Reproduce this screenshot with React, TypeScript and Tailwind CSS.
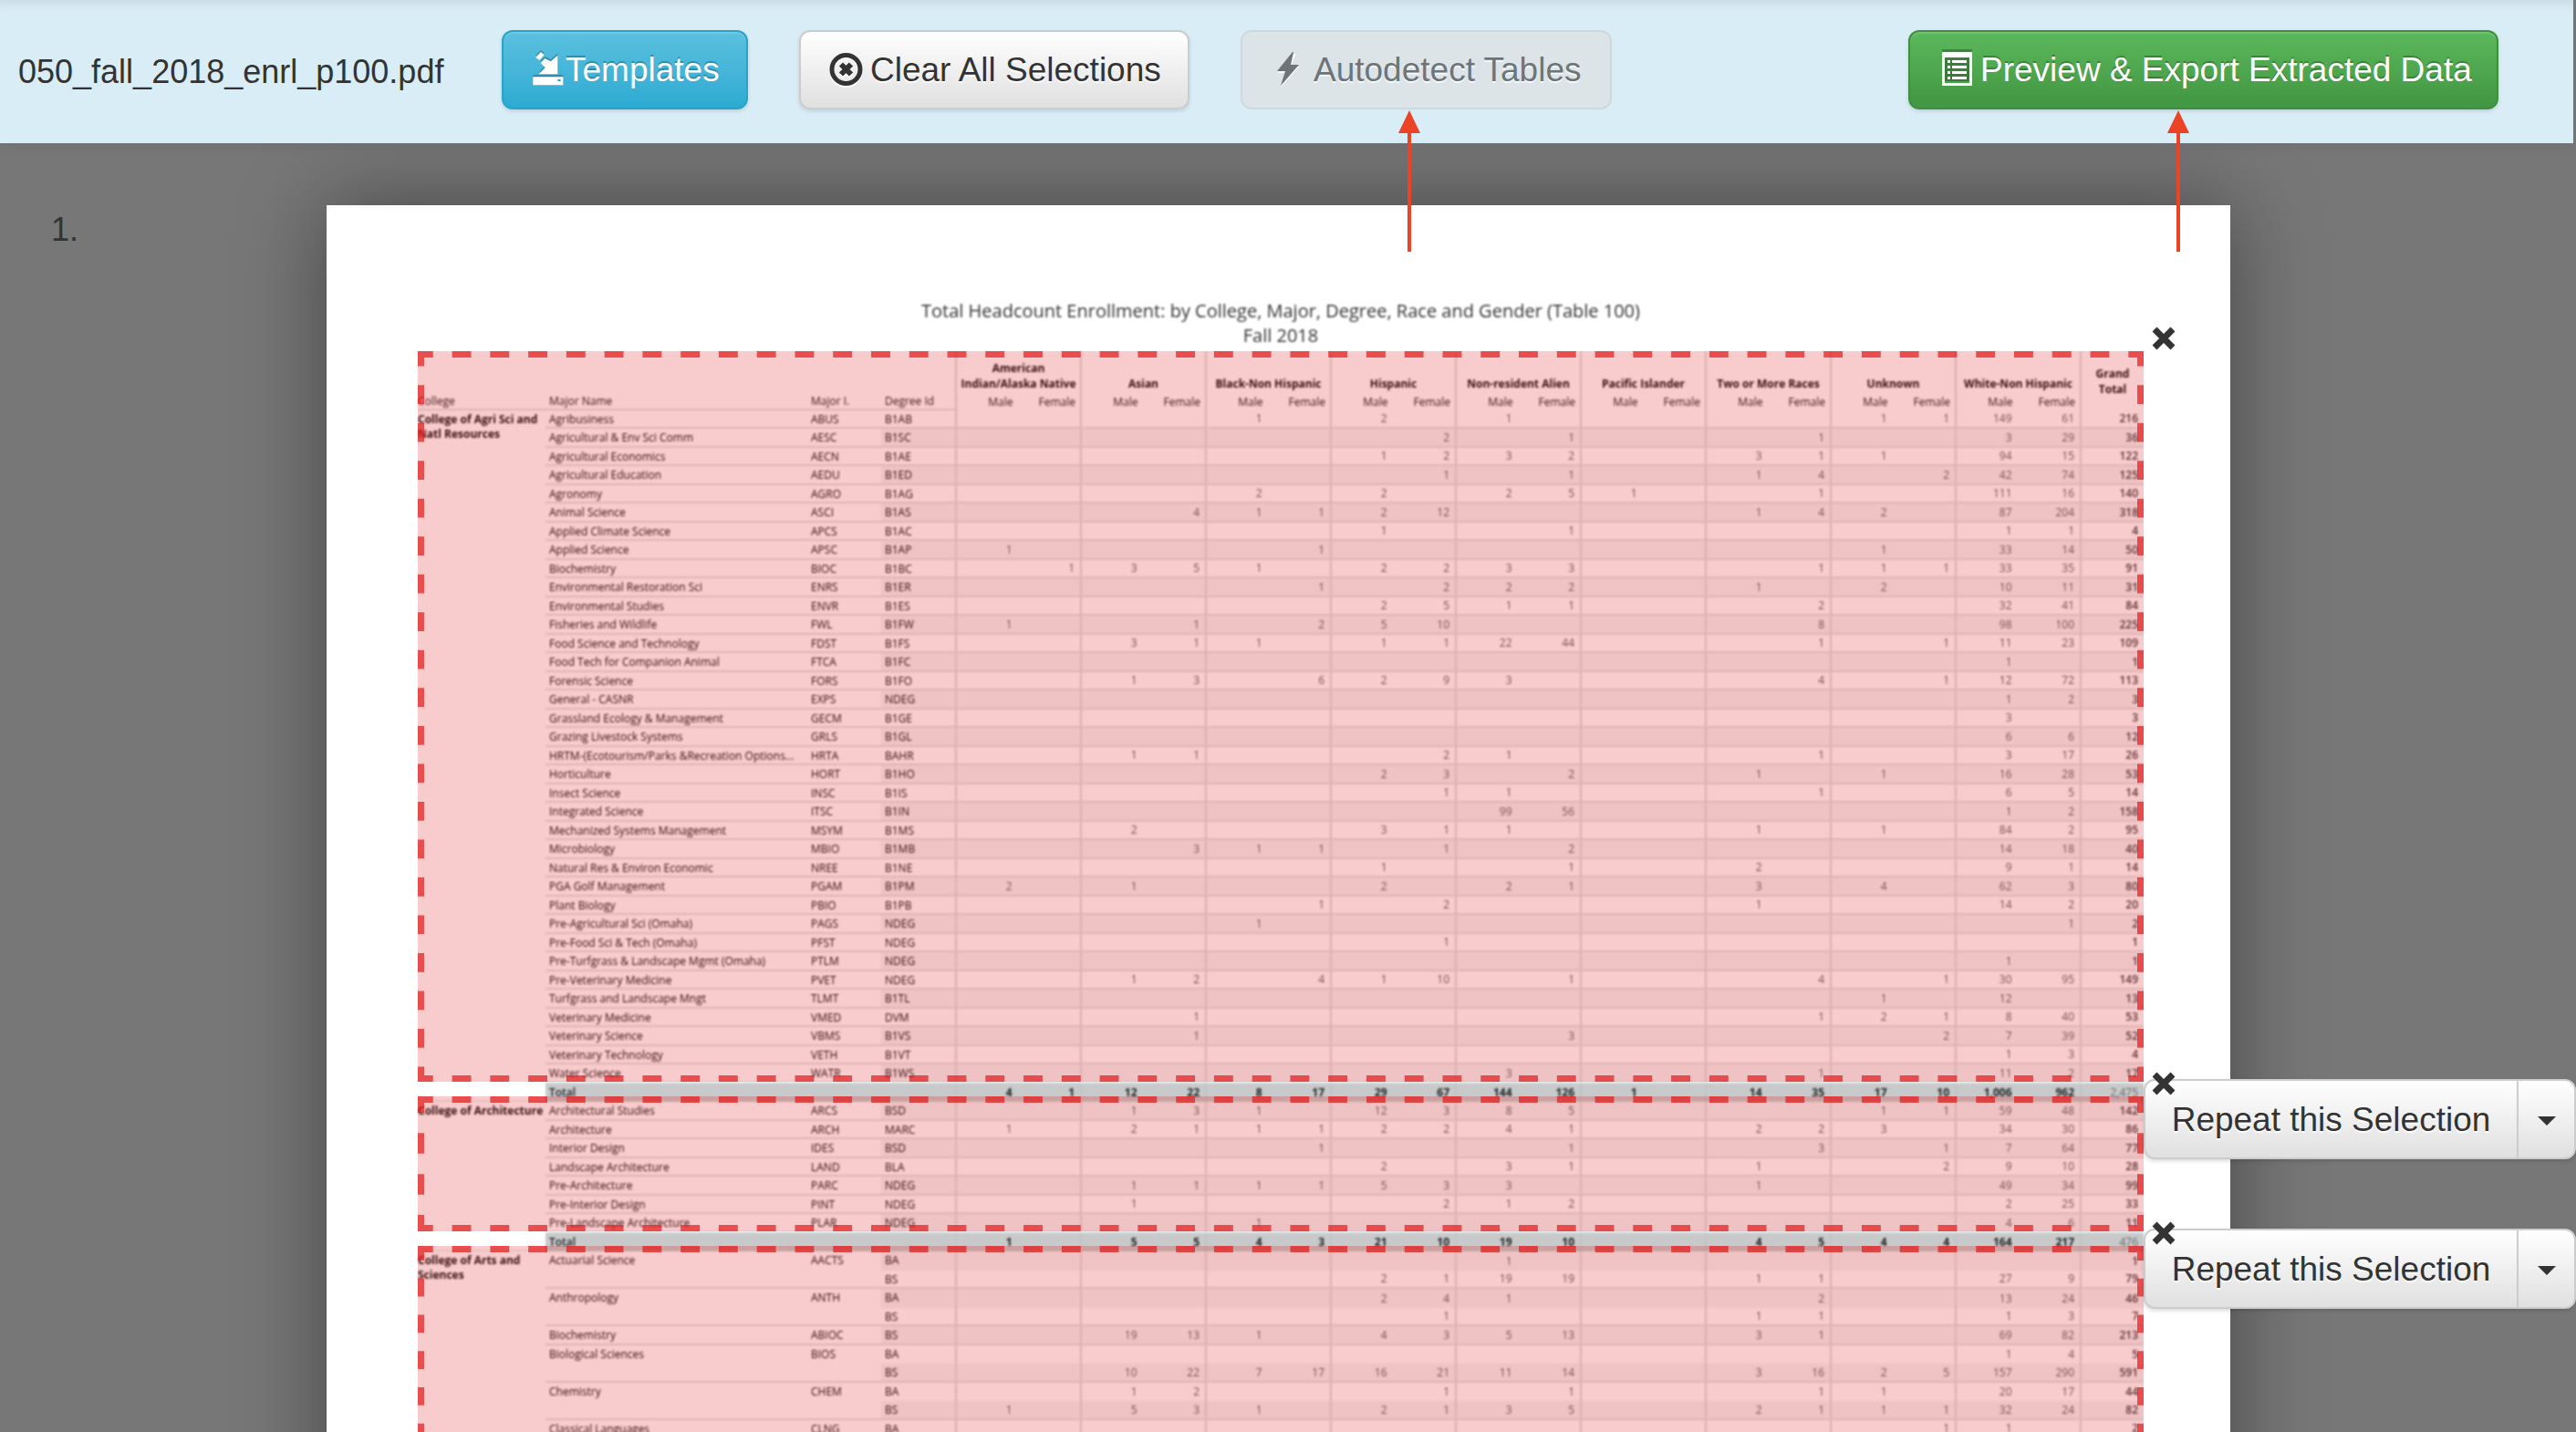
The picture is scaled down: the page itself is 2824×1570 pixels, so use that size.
import type { ReactNode } from "react";

type Row = { name?: string; code?: string; degree: string; span?: number; values: string };
type College = { name: string; rows: Row[]; total?: string };

const groups: { key: string; label: string }[] = [
  { key: "I", label: "American Indian/Alaska Native" },
  { key: "A", label: "Asian" },
  { key: "B", label: "Black-Non Hispanic" },
  { key: "H", label: "Hispanic" },
  { key: "N", label: "Non-resident Alien" },
  { key: "P", label: "Pacific Islander" },
  { key: "T", label: "Two or More Races" },
  { key: "U", label: "Unknown" },
  { key: "W", label: "White-Non Hispanic" },
];

// Counts are written as "<group><male>/<female>"; G holds the grand total.
const r = (name: string, code: string, degree: string, values: string, span = 1): Row => ({
  name,
  code,
  degree,
  values,
  span,
});
const sub = (degree: string, values: string): Row => ({ degree, values });

const colleges: College[] = [
  {
    name: "College of Agri Sci and Natl Resources",
    rows: [
      r("Agribusiness", "ABUS", "B1AB", "B1/ H2/ N1/ U1/1 W149/61 G216"),
      r("Agricultural & Env Sci Comm", "AESC", "B1SC", "H/2 N/1 T/1 W3/29 G36"),
      r("Agricultural Economics", "AECN", "B1AE", "H1/2 N3/2 T3/1 U1/ W94/15 G122"),
      r("Agricultural Education", "AEDU", "B1ED", "H/1 N/1 T1/4 U/2 W42/74 G125"),
      r("Agronomy", "AGRO", "B1AG", "B2/ H2/ N2/5 P1/ T/1 W111/16 G140"),
      r("Animal Science", "ASCI", "B1AS", "A/4 B1/1 H2/12 T1/4 U2/ W87/204 G318"),
      r("Applied Climate Science", "APCS", "B1AC", "H1/ N/1 W1/1 G4"),
      r("Applied Science", "APSC", "B1AP", "I1/ B/1 U1/ W33/14 G50"),
      r("Biochemistry", "BIOC", "B1BC", "I/1 A3/5 B1/ H2/2 N3/3 T/1 U1/1 W33/35 G91"),
      r("Environmental Restoration Sci", "ENRS", "B1ER", "B/1 H/2 N2/2 T1/ U2/ W10/11 G31"),
      r("Environmental Studies", "ENVR", "B1ES", "H2/5 N1/1 T/2 W32/41 G84"),
      r("Fisheries and Wildlife", "FWL", "B1FW", "I1/ A/1 B/2 H5/10 T/8 W98/100 G225"),
      r("Food Science and Technology", "FDST", "B1FS", "A3/1 B1/ H1/1 N22/44 T/1 U/1 W11/23 G109"),
      r("Food Tech for Companion Animal", "FTCA", "B1FC", "W1/ G1"),
      r("Forensic Science", "FORS", "B1FO", "A1/3 B/6 H2/9 N3/ T/4 U/1 W12/72 G113"),
      r("General - CASNR", "EXPS", "NDEG", "W1/2 G3"),
      r("Grassland Ecology & Management", "GECM", "B1GE", "W3/ G3"),
      r("Grazing Livestock Systems", "GRLS", "B1GL", "W6/6 G12"),
      r("HRTM-(Ecotourism/Parks &Recreation Options...", "HRTA", "BAHR", "A1/1 H/2 N1/ T/1 W3/17 G26"),
      r("Horticulture", "HORT", "B1HO", "H2/3 N/2 T1/ U1/ W16/28 G53"),
      r("Insect Science", "INSC", "B1IS", "H/1 N1/ T/1 W6/5 G14"),
      r("Integrated Science", "ITSC", "B1IN", "N99/56 W1/2 G158"),
      r("Mechanized Systems Management", "MSYM", "B1MS", "A2/ H3/1 N1/ T1/ U1/ W84/2 G95"),
      r("Microbiology", "MBIO", "B1MB", "A/3 B1/1 H/1 N/2 W14/18 G40"),
      r("Natural Res & Environ Economic", "NREE", "B1NE", "H1/ N/1 T2/ W9/1 G14"),
      r("PGA Golf Management", "PGAM", "B1PM", "I2/ A1/ H2/ N2/1 T3/ U4/ W62/3 G80"),
      r("Plant Biology", "PBIO", "B1PB", "B/1 H/2 T1/ W14/2 G20"),
      r("Pre-Agricultural Sci (Omaha)", "PAGS", "NDEG", "B1/ W/1 G2"),
      r("Pre-Food Sci & Tech (Omaha)", "PFST", "NDEG", "H/1 G1"),
      r("Pre-Turfgrass & Landscape Mgmt (Omaha)", "PTLM", "NDEG", "W1/ G1"),
      r("Pre-Veterinary Medicine", "PVET", "NDEG", "A1/2 B/4 H1/10 N/1 T/4 U/1 W30/95 G149"),
      r("Turfgrass and Landscape Mngt", "TLMT", "B1TL", "U1/ W12/ G13"),
      r("Veterinary Medicine", "VMED", "DVM", "A/1 T/1 U2/1 W8/40 G53"),
      r("Veterinary Science", "VBMS", "B1VS", "A/1 N/3 U/2 W7/39 G52"),
      r("Veterinary Technology", "VETH", "B1VT", "W1/3 G4"),
      r("Water Science", "WATR", "B1WS", "N3/ T/1 W11/2 G17"),
    ],
    total: "I4/1 A12/22 B8/17 H29/67 N144/126 P1/ T14/35 U17/10 W1,006/962 G2,475",
  },
  {
    name: "College of Architecture",
    rows: [
      r("Architectural Studies", "ARCS", "BSD", "A1/3 B1/ H12/3 N8/5 U1/1 W59/48 G142"),
      r("Architecture", "ARCH", "MARC", "I1/ A2/1 B1/1 H2/2 N4/1 T2/2 U3/ W34/30 G86"),
      r("Interior Design", "IDES", "BSD", "B/1 N/1 T/3 U/1 W7/64 G77"),
      r("Landscape Architecture", "LAND", "BLA", "H2/ N3/1 T1/ U/2 W9/10 G28"),
      r("Pre-Architecture", "PARC", "NDEG", "A1/1 B1/1 H5/3 N3/ T1/ W49/34 G99"),
      r("Pre-Interior Design", "PINT", "NDEG", "A1/ H/2 N1/2 W2/25 G33"),
      r("Pre-Landscape Architecture", "PLAR", "NDEG", "B1/ W4/6 G11"),
    ],
    total: "I1/ A5/5 B4/3 H21/10 N19/10 T4/5 U4/4 W164/217 G476",
  },
  {
    name: "College of Arts and Sciences",
    rows: [
      r("Actuarial Science", "AACTS", "BA", "N1/ G1", 2),
      sub("BS", "H2/1 N19/19 T1/1 W27/9 G79"),
      r("Anthropology", "ANTH", "BA", "H2/4 N1/ T/2 W13/24 G46", 2),
      sub("BS", "H/1 T1/1 W1/3 G7"),
      r("Biochemistry", "ABIOC", "BS", "A19/13 B1/ H4/3 N5/13 T3/1 W69/82 G213"),
      r("Biological Sciences", "BIOS", "BA", "W1/4 G5", 2),
      sub("BS", "A10/22 B7/17 H16/21 N11/14 T3/16 U2/5 W157/290 G591"),
      r("Chemistry", "CHEM", "BA", "A1/2 H/1 N/1 T/1 U1/ W20/17 G44", 2),
      sub("BS", "I1/ A5/3 B1/ H2/1 N3/5 T2/1 U1/1 W32/24 G82"),
      r("Classical Languages", "CLNG", "BA", "U/1 W1/ G2"),
    ],
  },
];

function parse(values: string) {
  const found: Record<string, string[]> = {};
  values.split(" ").forEach((part) => {
    found[part[0]] = part.slice(1).split("/");
  });
  return found;
}

function Counts({ values, shade, line, total }: { values: string; shade: string; line: string; total?: boolean }) {
  const v = parse(values);
  const side = total ? "border-[#c0c2c3]" : "border-[#dcdcdc]";
  return (
    <>
      {groups.map((g) => [
        <td key={g.key + "m"} className={`border-l-2 pr-[6px] text-right ${side} ${shade} ${line}`}>
          {v[g.key]?.[0]}
        </td>,
        <td key={g.key + "f"} className={`pr-[6px] text-right ${shade} ${line}`}>
          {v[g.key]?.[1]}
        </td>,
      ])}
      <td
        className={`border-l-2 pr-[6px] text-right ${side} ${shade} ${line} ${total ? "font-normal text-[#666]" : "font-semibold text-[#444]"}`}
      >
        {v.G?.[0]}
      </td>
    </>
  );
}

function CollegeRows({ college, start }: { college: College; start: number }) {
  const count = college.rows.length + (college.total ? 1 : 0);
  return (
    <tbody>
      {college.rows.map((row, i) => {
        const odd = (start + i) % 2 === 1;
        const shade = odd ? "bg-[#f4f4f4]" : "";
        const open = (row.span ?? 1) > 1;
        const line = open ? "" : "border-b-2 border-b-[#e2e2e2]";
        const height = odd ? "h-[21px]" : "h-5";
        return (
          <tr key={i} className={`${height} text-[#666]`}>
            {i === 0 && (
              <th
                scope="rowgroup"
                rowSpan={count}
                className="border-b-2 border-b-[#eee] pt-[2px] text-left align-top font-bold leading-4 text-[#111]"
              >
                {college.name}
              </th>
            )}
            {row.name && (
              <>
                <th
                  scope="row"
                  rowSpan={row.span}
                  className="whitespace-nowrap border-b-2 border-b-[#e2e2e2] pl-1 pt-[2px] text-left align-top font-normal text-[#111]"
                >
                  {row.name}
                </th>
                <td
                  rowSpan={row.span}
                  className="border-b-2 border-b-[#e2e2e2] pl-1 pt-[2px] align-top text-[#111]"
                >
                  {row.code}
                </td>
              </>
            )}
            <td className={`pl-1 pt-[2px] align-top text-[#111] ${shade} ${line}`}>{row.degree}</td>
            <Counts values={row.values} shade={shade} line={line} />
          </tr>
        );
      })}
      {college.total && (
        <tr className="h-5 bg-[#c7c9ca] font-bold text-[#222]">
          <th scope="row" colSpan={3} className="pl-1 text-left font-semibold">
            Total
          </th>
          <Counts values={college.total} shade="" line="" total />
        </tr>
      )}
    </tbody>
  );
}

function EnrollmentTable() {
  const starts = [0, 37, 45];
  return (
    <table className="w-full table-fixed border-separate border-spacing-0 text-[12px] leading-4 blur-[1px]">
      <colgroup>
        <col className="w-[140px]" />
        <col className="w-[287px]" />
        <col className="w-[81px]" />
        <col className="w-[81px]" />
        {groups.map((g) => [<col key={g.key + "m"} />, <col key={g.key + "f"} />])}
        <col className="w-[70px]" />
      </colgroup>
      <thead className="text-[#222]">
        <tr className="h-[46px]">
          <td colSpan={4} />
          {groups.map((g) => (
            <th
              key={g.key}
              scope="colgroup"
              colSpan={2}
              className="border-l-2 border-[#dcdcdc] px-1 pb-[2px] align-bottom font-bold leading-[17px] text-[#111]"
            >
              {g.label}
            </th>
          ))}
          <th rowSpan={2} scope="col" className="border-l-2 border-[#dcdcdc] px-3 font-bold leading-[17px] text-[#111]">
            Grand Total
          </th>
        </tr>
        <tr className="h-[19px]">
          {["College", "Major Name", "Major I.", "Degree Id"].map((label, i) => (
            <th
              key={label}
              scope="col"
              className={`border-b-2 border-b-[#e2e2e2] text-left font-normal ${i ? "pl-1" : ""}`}
            >
              {label}
            </th>
          ))}
          {groups.map((g) => [
            <th key={g.key + "m"} scope="col" className="border-l-2 border-[#dcdcdc] pr-[5px] text-right font-normal">
              Male
            </th>,
            <th key={g.key + "f"} scope="col" className="pr-[5px] text-right font-normal">
              Female
            </th>,
          ])}
        </tr>
      </thead>
      {colleges.map((c, i) => (
        <CollegeRows key={c.name} college={c} start={starts[i]} />
      ))}
    </table>
  );
}

function DashedSide({ x1, y1, x2, y2, periods }: { x1: string; y1: string; x2: string; y2: string; periods: number }) {
  return (
    <line x1={x1} y1={y1} x2={x2} y2={y2} pathLength={periods * 40 + 52} strokeDasharray="20 20" strokeDashoffset="4" />
  );
}

function Selection({ className, periods, repeat }: { className: string; periods: number; repeat?: boolean }) {
  return (
    <div className={`absolute inset-x-0 bg-[rgba(220,0,0,0.2)] ${className}`}>
      <svg className="absolute inset-0 h-full w-full" stroke="#e41a1a" strokeWidth={14} opacity={0.7} aria-hidden="true">
        <DashedSide x1="0" y1="0" x2="100%" y2="0" periods={44} />
        <DashedSide x1="0" y1="100%" x2="100%" y2="100%" periods={44} />
        <DashedSide x1="0" y1="0" x2="0" y2="100%" periods={periods} />
        <DashedSide x1="100%" y1="0" x2="100%" y2="100%" periods={periods} />
      </svg>
      {repeat && (
        <div className="absolute left-full -top-[19px] flex h-[88px] rounded-xl shadow-[0_2px_4px_rgba(0,0,0,0.15)]">
          <button className="w-[411px] whitespace-nowrap rounded-l-xl border-2 border-[#ccc] bg-linear-to-b from-white to-[#e0e0e0] pt-[2px] text-[37px] leading-[50px] text-[#333] [text-shadow:0_2px_0_#fff]">
            Repeat this Selection
          </button>
          <button
            aria-label="More repeat options"
            className="-ml-[2px] flex w-[65px] items-center justify-center rounded-r-xl border-2 border-[#ccc] bg-linear-to-b from-white to-[#e0e0e0] pt-1"
          >
            <svg width="20" height="10" viewBox="0 0 20 10" fill="#333" aria-hidden="true">
              <path d="M0 0h20L10 10z" />
            </svg>
          </button>
        </div>
      )}
      <button aria-label="Remove selection" className="absolute left-full -top-[27px] ml-[9px]">
        <svg width="26" height="26" viewBox="0 0 26 26" stroke="#333" strokeWidth={7} aria-hidden="true">
          <path d="M3 3l20 20M23 3L3 23" />
        </svg>
      </button>
    </div>
  );
}

function Arrow({ className }: { className: string }) {
  return (
    <svg
      className={`pointer-events-none absolute top-[88px] z-10 ${className}`}
      width="26"
      height="156"
      viewBox="0 0 26 156"
      fill="#ec4226"
      aria-hidden="true"
    >
      <path d="M13 0l12 25H15v130h-4V25H1z" />
    </svg>
  );
}

const button =
  "flex h-[87px] items-center whitespace-nowrap rounded-xl border-2 text-[37px] leading-[50px]";

function Toolbar() {
  const wrap = (node: ReactNode, arrow: string, cls: string) => (
    <div className={`relative ${cls}`}>
      {node}
      <Arrow className={arrow} />
    </div>
  );
  return (
    <header className="relative z-10 mr-[3px] flex h-[157px] items-start gap-14 bg-[#d9edf7] pl-5 pr-[82px] pt-[33px] shadow-[0_4px_16px_rgba(0,0,0,0.06),inset_0_12px_12px_-8px_rgba(0,0,0,0.08)]">
      <span className="w-[474px] pt-[2px] text-[36px] leading-[87px] text-[#333]">050_fall_2018_enrl_p100.pdf</span>
      <button
        className={`${button} w-[270px] border-[#28a4c9] bg-linear-to-b from-[#5bc0de] to-[#2aabd2] pl-8 text-white shadow-[inset_0_2px_0_rgba(255,255,255,0.15),0_2px_4px_rgba(0,0,0,0.12)] [text-shadow:0_-2px_0_rgba(0,0,0,0.25)]`}
      >
        <svg className="mb-[6px] mr-[2px]" width="34" height="40" viewBox="116 86 102 120" aria-hidden="true">
          <path
            fill="#000"
            fillOpacity="0.25"
            d="M117 171h99v8h-99zM198 100v62h-62l21-22-15-15 14-15 19 10zM126 106l17-17 11 10-16 17z"
          />
          <path
            fill="#fff"
            d="M117 177h99v27h-99zM198 106v62h-62l21-22-15-15 14-15 19 10zM126 112l17-17 11 10-16 17z"
          />
          <path fill="#2aabd2" d="M198 185h10v6h-10z" />
        </svg>
        Templates
      </button>
      <button
        className={`${button} w-[428px] border-[#ccc] bg-linear-to-b from-white to-[#e0e0e0] pl-[31px] text-[#333] shadow-[0_2px_4px_rgba(0,0,0,0.12)] [text-shadow:0_2px_0_#fff]`}
      >
        <svg className="mb-[2px] mr-2" width="37" height="40" viewBox="0 0 37 40" fill="none" aria-hidden="true">
          <g stroke="#fff">
            <circle cx="18.5" cy="22" r="15.5" strokeWidth="5" />
            <path d="M13 16.500l11 11M24 16.500l-11 11" strokeWidth="6" />
          </g>
          <g stroke="#333">
            <circle cx="18.5" cy="20" r="15.500" strokeWidth="5" />
            <path d="M13 14.500l11 11M24 14.500l-11 11" strokeWidth="6" />
          </g>
        </svg>
        Clear All Selections
      </button>
      {wrap(
        <button
          disabled
          className={`${button} w-[407px] border-[#cfd8dc] bg-[#dce4e8] pl-[38px] text-[#6d7579] [text-shadow:0_2px_0_#f4f9fb]`}
        >
          <svg className="mb-[2px] mr-4" width="24" height="40" viewBox="0 0 24 40" aria-hidden="true">
            <path fill="#f4f9fb" d="M17 3L0 24h9L4 40 24 17h-9l6-14z" />
            <path fill="#6d7579" d="M17 1L0 22h9L4 38 24 15h-9l3-14z" />
          </svg>
          Autodetect Tables
        </button>,
        "left-[172px]",
        "",
      )}
      {wrap(
        <button
          className={`${button} w-[647px] border-[#3e8f3e] bg-linear-to-b from-[#5cb85c] to-[#419641] pl-[35px] text-white shadow-[inset_0_2px_0_rgba(255,255,255,0.15),0_2px_4px_rgba(0,0,0,0.12)] [text-shadow:0_-2px_0_rgba(0,0,0,0.25)]`}
        >
          <svg className="mb-[6px] mr-[9px]" width="33" height="40" viewBox="0 0 33 40" aria-hidden="true">
            <path fill="#000" fillOpacity="0.25" d="M0 0h33v4H0zM3 9h27v26H3z" />
            <path fill="#fff" fillRule="evenodd" d="M0 3h33v37H0zM3 9v28h27V9z" />
            <path
              fill="#fff"
              d="M6 12h3v3H6zM6 18h3v3H6zM6 24h3v3H6zM6 30h3v3H6zM11 12h16v3H11zM11 18h16v3H11zM11 24h16v3H11zM11 30h16v3H11z"
            />
          </svg>
          Preview & Export Extracted Data
        </button>,
        "left-[283px]",
        "ml-auto",
      )}
    </header>
  );
}

export default function App() {
  return (
    <div className="flex h-screen flex-col overflow-hidden bg-[#777] font-['Liberation_Sans',Arial,sans-serif]">
      <Toolbar />
      <main className="flex min-h-0 flex-1 items-start pt-[68px]">
        <div className="w-[358px] shrink-0 pl-14 text-[36px] leading-[54px] text-[#333]">1.</div>
        <section className="min-w-0 flex-1 bg-white pb-40 pl-[100px] pr-[95px] pt-[102px] font-['Open_Sans','Noto_Sans',sans-serif] shadow-[0_0_90px_rgba(0,0,0,0.42)]">
          <h1 className="mb-1 text-center text-[20px] leading-[27px] text-[#333] blur-[1px]">
            Total Headcount Enrollment: by College, Major, Degree, Race and Gender (Table 100)
            <br />
            Fall 2018
          </h1>
          <div className="relative">
            <EnrollmentTable />
            <div className="font-['Liberation_Sans',Arial,sans-serif]">
              <Selection className="top-0 h-[801px]" periods={18} />
              <Selection className="top-[817px] h-[148px]" periods={2} repeat />
              <Selection className="top-[981px] h-[290px]" periods={6} repeat />
            </div>
          </div>
        </section>
        <div className="w-[379px] shrink-0" />
      </main>
    </div>
  );
}
